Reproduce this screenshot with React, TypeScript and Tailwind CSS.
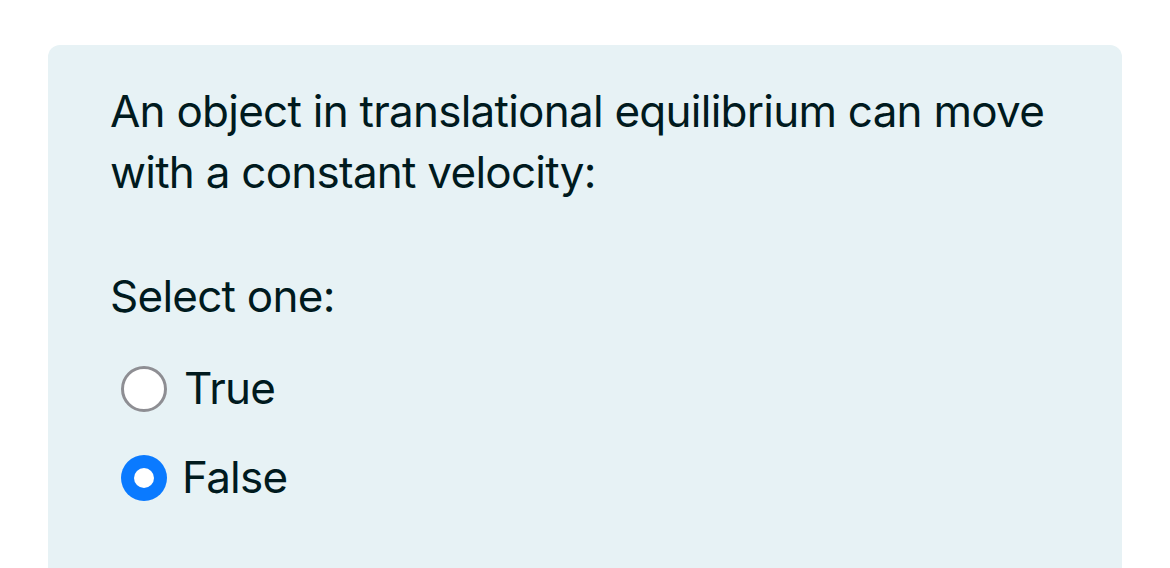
import React from "react";

export default function App() {
  const font = { fontFamily: "Inter, 'Noto Sans', sans-serif" };
  return (
    <div className="w-[1170px] h-[568px] bg-white overflow-hidden pt-[45px] px-[48px]" style={font}>
      <div className="bg-[#e7f2f5] rounded-t-[12px] h-[600px] pl-[62px] pr-[40px] pt-[36px] text-[#001a1e] text-[44px] leading-[61px] tracking-[-0.75px]">
        <p>An object in translational equilibrium can move with a constant velocity:</p>
        <p className="mt-[63px]">Select one:</p>
        <div className="mt-[31px] flex flex-col gap-[28px]">
          <label className="flex items-center">
            <span className="ml-[11px] w-[46px] h-[46px] rounded-full border-[3px] border-[#8e8e93] bg-white shrink-0" />
            <span className="ml-[17px]">True</span>
          </label>
          <label className="flex items-center">
            <span className="ml-[11px] w-[46px] h-[46px] rounded-full bg-[#0a7aff] flex items-center justify-center shrink-0">
              <span className="w-[20px] h-[20px] rounded-full bg-white" />
            </span>
            <span className="ml-[15px]">False</span>
          </label>
        </div>
      </div>
    </div>
  );
}
